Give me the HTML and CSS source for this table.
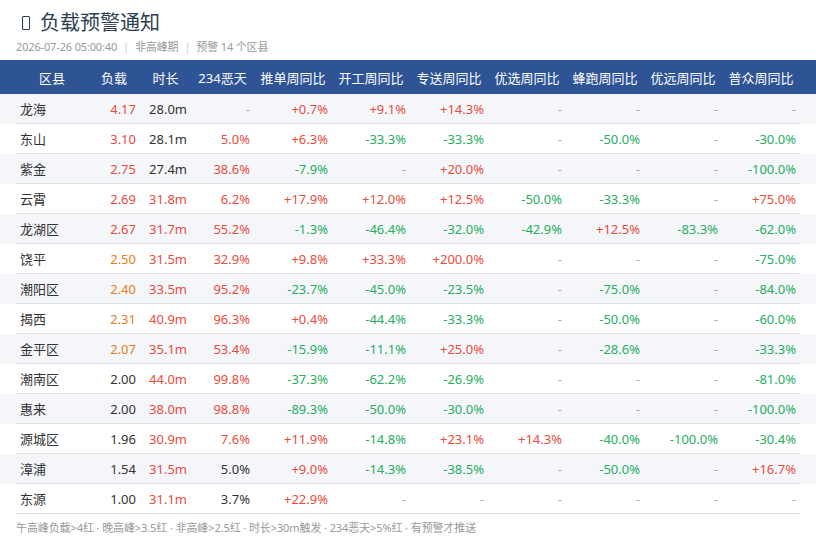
FILE: index.html
```html
<!DOCTYPE html>
<html lang="zh">
<head>
<meta charset="utf-8">
<link rel="stylesheet" href="styles.css">
</head>
<body>
<div class="head">
  <div class="title"><span class="tofu"></span><span>负载预警通知</span></div>
  <div class="sub">2026-07-26 05:00:40<span class="sep">|</span>非高峰期<span class="sep">|</span>预警 14 个区县</div>
</div>
<div class="table">
  <div class="row thead"><div class="cells">
    <div>区县</div><div>负载</div><div>时长</div><div>234恶天</div><div>推单周同比</div><div>开工周同比</div><div>专送周同比</div><div>优选周同比</div><div>蜂跑周同比</div><div>优远周同比</div><div>普众周同比</div>
  </div></div>
  <div class="row odd"><div class="cells">
    <div>龙海</div><div class="r">4.17</div><div>28.0m</div><div class="d">-</div><div class="r">+0.7%</div><div class="r">+9.1%</div><div class="r">+14.3%</div><div class="d">-</div><div class="d">-</div><div class="d">-</div><div class="d">-</div>
  </div></div>
  <div class="row"><div class="cells">
    <div>东山</div><div class="r">3.10</div><div>28.1m</div><div class="r">5.0%</div><div class="r">+6.3%</div><div class="g">-33.3%</div><div class="g">-33.3%</div><div class="d">-</div><div class="g">-50.0%</div><div class="d">-</div><div class="g">-30.0%</div>
  </div></div>
  <div class="row odd"><div class="cells">
    <div>紫金</div><div class="r">2.75</div><div>27.4m</div><div class="r">38.6%</div><div class="g">-7.9%</div><div class="d">-</div><div class="r">+20.0%</div><div class="d">-</div><div class="d">-</div><div class="d">-</div><div class="g">-100.0%</div>
  </div></div>
  <div class="row"><div class="cells">
    <div>云霄</div><div class="r">2.69</div><div class="r">31.8m</div><div class="r">6.2%</div><div class="r">+17.9%</div><div class="r">+12.0%</div><div class="r">+12.5%</div><div class="g">-50.0%</div><div class="g">-33.3%</div><div class="d">-</div><div class="r">+75.0%</div>
  </div></div>
  <div class="row odd"><div class="cells">
    <div>龙湖区</div><div class="r">2.67</div><div class="r">31.7m</div><div class="r">55.2%</div><div class="g">-1.3%</div><div class="g">-46.4%</div><div class="g">-32.0%</div><div class="g">-42.9%</div><div class="r">+12.5%</div><div class="g">-83.3%</div><div class="g">-62.0%</div>
  </div></div>
  <div class="row"><div class="cells">
    <div>饶平</div><div class="o">2.50</div><div class="r">31.5m</div><div class="r">32.9%</div><div class="r">+9.8%</div><div class="r">+33.3%</div><div class="r">+200.0%</div><div class="d">-</div><div class="d">-</div><div class="d">-</div><div class="g">-75.0%</div>
  </div></div>
  <div class="row odd"><div class="cells">
    <div>潮阳区</div><div class="o">2.40</div><div class="r">33.5m</div><div class="r">95.2%</div><div class="g">-23.7%</div><div class="g">-45.0%</div><div class="g">-23.5%</div><div class="d">-</div><div class="g">-75.0%</div><div class="d">-</div><div class="g">-84.0%</div>
  </div></div>
  <div class="row"><div class="cells">
    <div>揭西</div><div class="o">2.31</div><div class="r">40.9m</div><div class="r">96.3%</div><div class="r">+0.4%</div><div class="g">-44.4%</div><div class="g">-33.3%</div><div class="d">-</div><div class="g">-50.0%</div><div class="d">-</div><div class="g">-60.0%</div>
  </div></div>
  <div class="row odd"><div class="cells">
    <div>金平区</div><div class="o">2.07</div><div class="r">35.1m</div><div class="r">53.4%</div><div class="g">-15.9%</div><div class="g">-11.1%</div><div class="r">+25.0%</div><div class="d">-</div><div class="g">-28.6%</div><div class="d">-</div><div class="g">-33.3%</div>
  </div></div>
  <div class="row"><div class="cells">
    <div>潮南区</div><div>2.00</div><div class="r">44.0m</div><div class="r">99.8%</div><div class="g">-37.3%</div><div class="g">-62.2%</div><div class="g">-26.9%</div><div class="d">-</div><div class="d">-</div><div class="d">-</div><div class="g">-81.0%</div>
  </div></div>
  <div class="row odd"><div class="cells">
    <div>惠来</div><div>2.00</div><div class="r">38.0m</div><div class="r">98.8%</div><div class="g">-89.3%</div><div class="g">-50.0%</div><div class="g">-30.0%</div><div class="d">-</div><div class="d">-</div><div class="d">-</div><div class="g">-100.0%</div>
  </div></div>
  <div class="row"><div class="cells">
    <div>源城区</div><div>1.96</div><div class="r">30.9m</div><div class="r">7.6%</div><div class="r">+11.9%</div><div class="g">-14.8%</div><div class="r">+23.1%</div><div class="r">+14.3%</div><div class="g">-40.0%</div><div class="g">-100.0%</div><div class="g">-30.4%</div>
  </div></div>
  <div class="row odd"><div class="cells">
    <div>漳浦</div><div>1.54</div><div class="r">31.5m</div><div>5.0%</div><div class="r">+9.0%</div><div class="g">-14.3%</div><div class="g">-38.5%</div><div class="d">-</div><div class="g">-50.0%</div><div class="d">-</div><div class="r">+16.7%</div>
  </div></div>
  <div class="row"><div class="cells">
    <div>东源</div><div>1.00</div><div class="r">31.1m</div><div>3.7%</div><div class="r">+22.9%</div><div class="d">-</div><div class="d">-</div><div class="d">-</div><div class="d">-</div><div class="d">-</div><div class="d">-</div>
  </div></div>
</div>
<div class="foot">午高峰负载&gt;4红 · 晚高峰&gt;3.5红 · 非高峰&gt;2.5红 · 时长&gt;30m触发 · 234恶天&gt;5%红 · 有预警才推送</div>
</body>
</html>
```
FILE: styles.css
```css
html, body {
  margin: 0;
  padding: 0;
  background: #ffffff;
  font-family: "Noto Sans", "Open Sans", "Noto Sans CJK SC", sans-serif;
  color: #333333;
}
.head {
  padding: 11px 16px 0;
  height: 49px;
  box-sizing: border-box;
}
.title {
  display: flex;
  align-items: center;
  gap: 10px;
  font-size: 20px;
  line-height: 24px;
  color: #2c3e50;
  padding-left: 6px;
}
.tofu {
  display: inline-block;
  width: 6px;
  height: 12px;
  border: 1.5px solid #2c3e50;
  border-radius: 1px;
}
.sub {
  margin-top: 5px;
  font-size: 11px;
  line-height: 14px;
  color: #999999;
  letter-spacing: -0.15px;
}
.sep {
  color: #cccccc;
  margin: 0 6px;
}
.table {
  margin-top: 11px;
}
.row {
  padding: 0 16px;
  background: #ffffff;
}
.row.odd {
  background: #f5f6fa;
}
.cells {
  display: grid;
  grid-template-columns: 72px 52px 51px 63px repeat(7, 78px);
  height: 30px;
  align-items: center;
  border-bottom: 1px solid #dfe2e8;
  box-sizing: border-box;
  font-size: 13px;
}
.cells > div {
  padding: 0 4px;
  text-align: right;
  white-space: nowrap;
}
.cells > div:first-child {
  text-align: left;
}
.thead {
  background: #2e5496;
}
.thead .cells {
  height: 34px;
  border-bottom: none;
  color: #ffffff;
}
.thead .cells > div {
  text-align: center;
  padding: 0;
}
.thead .cells > div:first-child {
  text-align: center;
}
.r { color: #e74c3c; }
.g { color: #27ae60; }
.o { color: #e67e22; }
.d { color: #aaaaaa; }
.foot {
  padding: 5px 16px 0;
  font-size: 11px;
  color: #999999;
  letter-spacing: -0.1px;
}
```
